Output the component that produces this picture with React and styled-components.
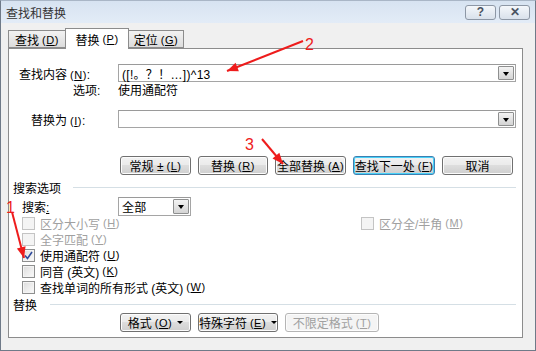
import React from 'react';
import styled, { createGlobalStyle } from 'styled-components';

const GlobalStyle = createGlobalStyle`
  html, body { margin: 0; padding: 0; background: #fff; }
  body {
    font-family: "Liberation Sans", "Noto Sans CJK SC", sans-serif;
    font-size: 12px;
    color: #000;
  }
  * { box-sizing: border-box; }
`;

const Window = styled.div`
  position: relative;
  width: 536px;
  height: 351px;
  background: #f0f0f0;
  border: 1px solid #6f7a88;
  border-top-color: #a9b6c6;
  display: flex;
  flex-direction: column;
  overflow: hidden;
`;

const TitleBar = styled.div`
  height: 22px;
  display: flex;
  align-items: center;
  padding: 0 5px 0 5px;
  background: linear-gradient(#d7e3f1, #e3ecf7);
  color: #333;
  font-size: 12px;
`;

const Title = styled.div`
  flex: 1;
  padding-top: 1px;
`;

const TitleButton = styled.div`
  width: 31px;
  height: 15px;
  margin-left: 3px;
  border: 1px solid #8d97a5;
  border-radius: 3px;
  background: linear-gradient(#f4f7fb, #d9e1eb);
  display: flex;
  align-items: center;
  justify-content: center;
  color: #4a5361;
  font-size: 12px;
  font-weight: bold;
  line-height: 1;
`;

const Body = styled.div`
  flex: 1;
  padding: 5px 12px 0 7px;
  display: flex;
  flex-direction: column;
`;

const TabBar = styled.div`
  display: flex;
  align-items: flex-end;
  height: 20px;
`;

const Tab = styled.div`
  height: ${p => (p.$active ? '21px' : '18px')};
  width: ${p => p.$w}px;
  margin-bottom: ${p => (p.$active ? '-1px' : '0')};
  position: relative;
  z-index: ${p => (p.$active ? 2 : 1)};
  border: 1px solid #8c8c8c;
  border-bottom: ${p => (p.$active ? 'none' : '1px solid #8c8c8c')};
  margin-left: ${p => (p.$active ? '-1px' : '0')};
  margin-right: ${p => (p.$active ? '-1px' : '0')};
  background: ${p => (p.$active ? '#fff' : 'linear-gradient(#f2f2f2, #dcdcdc)')};
  display: flex;
  align-items: center;
  justify-content: center;
  padding-top: ${p => (p.$active ? '0' : '1px')};
  font-size: 12px;
`;

const Key = styled.span`
  font-size: 11px;
  margin-left: 3px;
  letter-spacing: 0.5px;
  u { text-decoration: underline; }
`;

const Panel = styled.div`
  width: 515px;
  height: 290px;
  background: #fff;
  border: 1px solid #8c8c8c;
  padding: 15px 6px 0 4px;
  display: flex;
  flex-direction: column;
`;

const FieldRow = styled.div`
  display: flex;
  align-items: center;
  margin-top: ${p => p.$mt || 0}px;
  height: ${p => p.$h || 18}px;
`;

const Label = styled.div`
  width: 105px;
  padding-left: ${p => p.$indent || 0}px;
  color: ${p => (p.$disabled ? '#a0a0a0' : '#000')};
  white-space: nowrap;
  u { text-decoration: underline; }
`;

const ComboBox = styled.div`
  width: ${p => p.$w}px;
  height: ${p => p.$h || 18}px;
  border: 1px solid #a5a5a5;
  border-top-color: #9a9a9a;
  display: flex;
  align-items: center;
  background: #fff;
  padding: 0 1px 0 3px;
`;

const ComboText = styled.div`
  flex: 1;
  font-size: 12px;
  letter-spacing: 0.3px;
  white-space: nowrap;
`;

const DropBtn = styled.div`
  width: 16px;
  height: ${p => p.$h || 14}px;
  border: 1px solid #8e8f8f;
  border-radius: 1px;
  background: linear-gradient(#f3f3f3, #d4d4d4);
  display: flex;
  align-items: center;
  justify-content: center;
  &::after {
    content: '';
    border-left: 3.5px solid transparent;
    border-right: 3.5px solid transparent;
    border-top: 4px solid #000;
    margin-top: 1px;
  }
`;

const ButtonRow = styled.div`
  display: flex;
  gap: ${p => p.$gap || 7}px;
  padding-left: 107px;
  margin-top: ${p => p.$mt || 0}px;
`;

const Button = styled.div`
  width: ${p => p.$w}px;
  height: ${p => p.$h || 19}px;
  border: 1px solid ${p => (p.$focused ? '#3c7fb1' : p.$disabled ? '#b5b5b5' : '#707070')};
  box-shadow: ${p => (p.$focused ? 'inset 0 0 0 1px #48d1f8' : 'inset 0 0 0 1px #fcfcfc')};
  border-radius: 3px;
  background: ${p =>
    p.$disabled ? '#f4f4f4' : 'linear-gradient(#f2f2f2 0%, #ebebeb 45%, #dddddd 50%, #cfcfcf 100%)'};
  color: ${p => (p.$disabled ? '#a0a0a0' : '#000')};
  display: flex;
  align-items: center;
  justify-content: center;
  white-space: nowrap;
  font-size: 12px;
`;

const Caret = styled.span`
  display: inline-block;
  margin-left: 5px;
  border-left: 3px solid transparent;
  border-right: 3px solid transparent;
  border-top: 3px solid #000;
  vertical-align: middle;
`;

const SectionHead = styled.div`
  display: flex;
  align-items: center;
  height: 14px;
  margin-top: ${p => p.$mt || 0}px;
  &::after {
    content: '';
    flex: 1;
    height: 1px;
    background: #d5dfe5;
    margin-left: ${p => p.$gap || 12}px;
  }
`;

const CheckGrid = styled.div`
  display: grid;
  grid-template-columns: 339px 1fr;
  padding-left: 9px;
  margin-top: -1px;
`;

const CheckRow = styled.div`
  display: flex;
  align-items: center;
  height: 16px;
  color: ${p => (p.$disabled ? '#a0a0a0' : '#000')};
  white-space: nowrap;
`;

const Box = styled.div`
  width: 13px;
  height: 13px;
  margin-right: 5px;
  border: 1px solid ${p => (p.$disabled ? '#c4c4c4' : '#8e8f8f')};
  background: ${p => (p.$disabled ? '#f4f4f4' : 'linear-gradient(135deg, #dcdcdc, #fbfbfb)')};
  box-shadow: inset 0 0 0 1px #f4f4f4;
  display: flex;
  align-items: center;
  justify-content: center;
`;

const Overlay = styled.svg`
  position: absolute;
  left: -1px;
  top: -1px;
  pointer-events: none;
`;

const K = ({ c }) => (
  <Key>
    (<u>{c}</u>)
  </Key>
);

const Check = ({ label, k, checked, disabled }) => (
  <CheckRow $disabled={disabled}>
    <Box $disabled={disabled}>
      {checked && (
        <svg width="9" height="9" viewBox="0 0 9 9">
          <path d="M1 4.5 L3.5 7.5 L8 1" fill="none" stroke="#2e4a9b" strokeWidth="1.6" />
        </svg>
      )}
    </Box>
    {label}
    <K c={k} />
  </CheckRow>
);

const arrowHead = (x1, y1, x2, y2, len = 11, half = 4.5) => {
  const dx = x2 - x1;
  const dy = y2 - y1;
  const d = Math.hypot(dx, dy);
  const ux = dx / d;
  const uy = dy / d;
  const bx = x2 - ux * len;
  const by = y2 - uy * len;
  return `${x2},${y2} ${bx - uy * half},${by + ux * half} ${bx + uy * half},${by - ux * half}`;
};

const Arrow = ({ x1, y1, x2, y2 }) => (
  <g>
    <line x1={x1} y1={y1} x2={x2} y2={y2} stroke="#ee1c1c" strokeWidth="2" />
    <polygon points={arrowHead(x1, y1, x2, y2)} fill="#ee1c1c" />
  </g>
);

const Annotations = () => (
  <Overlay width="536" height="351">
    <Arrow x1={303} y1={41} x2={227} y2={71} />
    <Arrow x1={262} y1={139} x2={283} y2={164} />
    <Arrow x1={12} y1={212} x2={24} y2={258} />
    <g fill="#ee1c1c" fontFamily="Liberation Sans, sans-serif" fontSize="16">
      <text x="305" y="50">2</text>
      <text x="245" y="150">3</text>
      <text x="6" y="213">1</text>
    </g>
  </Overlay>
);

export default function App() {
  return (
    <>
      <GlobalStyle />
      <Window>
        <TitleBar>
          <Title>查找和替换</Title>
          <TitleButton>?</TitleButton>
          <TitleButton>✕</TitleButton>
        </TitleBar>
        <Body>
          <TabBar>
            <Tab $w={58}>
              查找<K c="D" />
            </Tab>
            <Tab $w={64} $active>
              替换<K c="P" />
            </Tab>
            <Tab $w={56}>
              定位<K c="G" />
            </Tab>
          </TabBar>
          <Panel>
            <FieldRow>
              <Label $indent={6}>
                查找内容<K c="N" />:
              </Label>
              <ComboBox $w={398}>
                <ComboText>([!。？！…])^13</ComboText>
                <DropBtn />
              </ComboBox>
            </FieldRow>
            <FieldRow $h={16} $mt={-1}>
              <Label $indent={60}>选项:</Label>
              <div>使用通配符</div>
            </FieldRow>
            <FieldRow $mt={13}>
              <Label $indent={18}>
                替换为<K c="I" />:
              </Label>
              <ComboBox $w={398}>
                <ComboText />
                <DropBtn />
              </ComboBox>
            </FieldRow>
            <ButtonRow $mt={28}>
              <Button $w={71}>
                常规 ± <K c="L" />
              </Button>
              <Button $w={70}>
                替换<K c="R" />
              </Button>
              <Button $w={71}>
                全部替换<K c="A" />
              </Button>
              <Button $w={82} $focused>
                查找下一处<K c="F" />
              </Button>
              <Button $w={71}>取消</Button>
            </ButtonRow>
            <SectionHead $mt={5}>搜索选项</SectionHead>
            <FieldRow $mt={3} $h={19}>
              <Label $indent={9}>
                搜索<u>:</u>
              </Label>
              <ComboBox $w={73} $h={19}>
                <ComboText>全部</ComboText>
                <DropBtn $h={15} />
              </ComboBox>
            </FieldRow>
            <CheckGrid>
              <Check label="区分大小写" k="H" disabled />
              <Check label="区分全/半角" k="M" disabled />
              <Check label="全字匹配" k="Y" disabled />
              <div />
              <Check label="使用通配符" k="U" checked />
              <div />
              <Check label="同音 (英文)" k="K" />
              <div />
              <Check label="查找单词的所有形式 (英文)" k="W" />
              <div />
            </CheckGrid>
            <SectionHead $mt={2} $gap={13}>替换</SectionHead>
            <ButtonRow $mt={2}>
              <Button $w={71}>
                格式<K c="O" />
                <Caret />
              </Button>
              <Button $w={80}>
                特殊字符<K c="E" />
                <Caret />
              </Button>
              <Button $w={94} $disabled>
                不限定格式<K c="T" />
              </Button>
            </ButtonRow>
          </Panel>
        </Body>
        <Annotations />
      </Window>
    </>
  );
}
